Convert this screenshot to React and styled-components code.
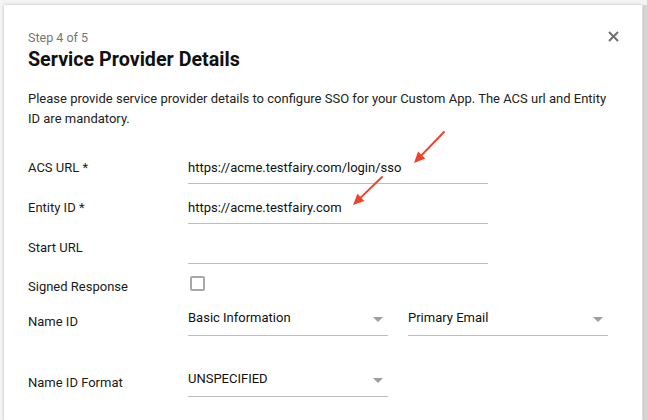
import styled, { createGlobalStyle } from "styled-components";

const GlobalStyle = createGlobalStyle`
  html, body {
    margin: 0;
    padding: 0;
    background: #f4f4f4;
    font-family: Roboto, "Liberation Sans", sans-serif;
    -webkit-font-smoothing: antialiased;
  }
`;

const Page = styled.div`
  display: flex;
  width: 647px;
  height: 420px;
  overflow: hidden;
  padding-top: 5px;
  padding-left: 4px;
  box-sizing: border-box;
`;

const Modal = styled.div`
  position: relative;
  width: 638px;
  flex-shrink: 0;
  background: #ffffff;
  box-shadow: 0 0 3px rgba(0, 0, 0, 0.25);
  padding: 24px 24px 0 24px;
  box-sizing: border-box;
`;

const Gutter = styled.div`
  flex: 1;
  margin-left: 1px;
  background: #d6d6d6;
`;

const Step = styled.div`
  font-size: 12.5px;
  line-height: 18px;
  color: #757575;
`;

const Title = styled.h2`
  margin: 0;
  font-size: 19.7px;
  line-height: 26px;
  font-weight: 700;
  color: #111;
`;

const CloseButton = styled.button`
  position: absolute;
  top: 23px;
  right: 21px;
  width: 16px;
  height: 16px;
  padding: 0;
  border: none;
  background: transparent;
  display: flex;
  align-items: center;
  justify-content: center;
`;

const Description = styled.p`
  margin: 16px 0 0 0;
  font-size: 13px;
  line-height: 19.5px;
  color: #222;
`;

const Form = styled.div`
  display: grid;
  grid-template-columns: 160px 1fr;
  row-gap: 7px;
  margin-top: 23px;
`;

const Label = styled.div`
  font-size: 13px;
  color: #1a1a1a;
  line-height: 16px;
  align-self: center;
  padding-top: ${(p) => p.$offset || 0}px;
`;

const Field = styled.div`
  width: ${(p) => p.$width || 300}px;
  height: 32px;
  border-bottom: 1px solid #bdbdbd;
  display: flex;
  align-items: center;
  font-size: 13px;
  color: #111;
  box-sizing: content-box;
`;

const SelectRow = styled.div`
  display: flex;
  gap: 20px;
`;

const SelectBox = styled(Field)`
  width: 200px;
  justify-content: space-between;
`;

const SelectText = styled.span`
  margin-top: -3px;
`;

const Caret = styled.span`
  width: 0;
  height: 0;
  margin-right: 5px;
  border-left: 5px solid transparent;
  border-right: 5px solid transparent;
  border-top: 5px solid #9e9e9e;
`;

const CheckCell = styled.div`
  height: 25px;
  display: flex;
  align-items: flex-start;
`;

const Checkbox = styled.span`
  margin-top: 5px;
  margin-left: 2px;
  width: 11px;
  height: 11px;
  border: 2px solid #a8a8a8;
  border-radius: 2px;
`;

const Spacer = styled.div`
  grid-column: 1 / -1;
  height: 14px;
`;

const Arrows = styled.svg`
  position: absolute;
  left: 0;
  top: 0;
  pointer-events: none;
`;

function Select({ value }) {
  return (
    <SelectBox>
      <SelectText>{value}</SelectText>
      <Caret />
    </SelectBox>
  );
}

function Arrow({ x1, y1, x2, y2 }) {
  const dx = x2 - x1;
  const dy = y2 - y1;
  const len = Math.hypot(dx, dy);
  const ux = dx / len;
  const uy = dy / len;
  const hl = 11;
  const hw = 5;
  const bx = x2 - ux * hl;
  const by = y2 - uy * hl;
  const pts = `${x2},${y2} ${bx - uy * hw},${by + ux * hw} ${bx + uy * hw},${by - ux * hw}`;
  return (
    <g>
      <line x1={x1} y1={y1} x2={bx} y2={by} stroke="#f2412b" strokeWidth="2" strokeLinecap="round" />
      <polygon points={pts} fill="#f2412b" />
    </g>
  );
}

export default function App() {
  return (
    <>
      <GlobalStyle />
      <Page>
        <Modal>
          <Step>Step 4 of 5</Step>
          <Title>Service Provider Details</Title>
          <CloseButton aria-label="Close">
            <svg width="11" height="11" viewBox="0 0 11 11">
              <path d="M1 1 L10 10 M10 1 L1 10" stroke="#707070" strokeWidth="2" />
            </svg>
          </CloseButton>
          <Description>
            Please provide service provider details to configure SSO for your Custom App. The ACS url and Entity ID are mandatory.
          </Description>
          <Form>
            <Label>ACS URL *</Label>
            <Field>https://acme.testfairy.com/login/sso</Field>
            <Label>Entity ID *</Label>
            <Field>https://acme.testfairy.com</Field>
            <Label>Start URL</Label>
            <Field />
            <Label $offset={6}>Signed Response</Label>
            <CheckCell>
              <Checkbox />
            </CheckCell>
            <Label $offset={4}>Name ID</Label>
            <SelectRow>
              <Select value="Basic Information" />
              <Select value="Primary Email" />
            </SelectRow>
            <Spacer />
            <Label $offset={4}>Name ID Format</Label>
            <SelectRow>
              <Select value="UNSPECIFIED" />
            </SelectRow>
          </Form>
          <Arrows width="638" height="415" viewBox="0 0 638 415">
            <Arrow x1={440} y1={127} x2={410} y2={158} />
            <Arrow x1={378} y1={172} x2={349} y2={200} />
          </Arrows>
        </Modal>
        <Gutter />
      </Page>
    </>
  );
}
